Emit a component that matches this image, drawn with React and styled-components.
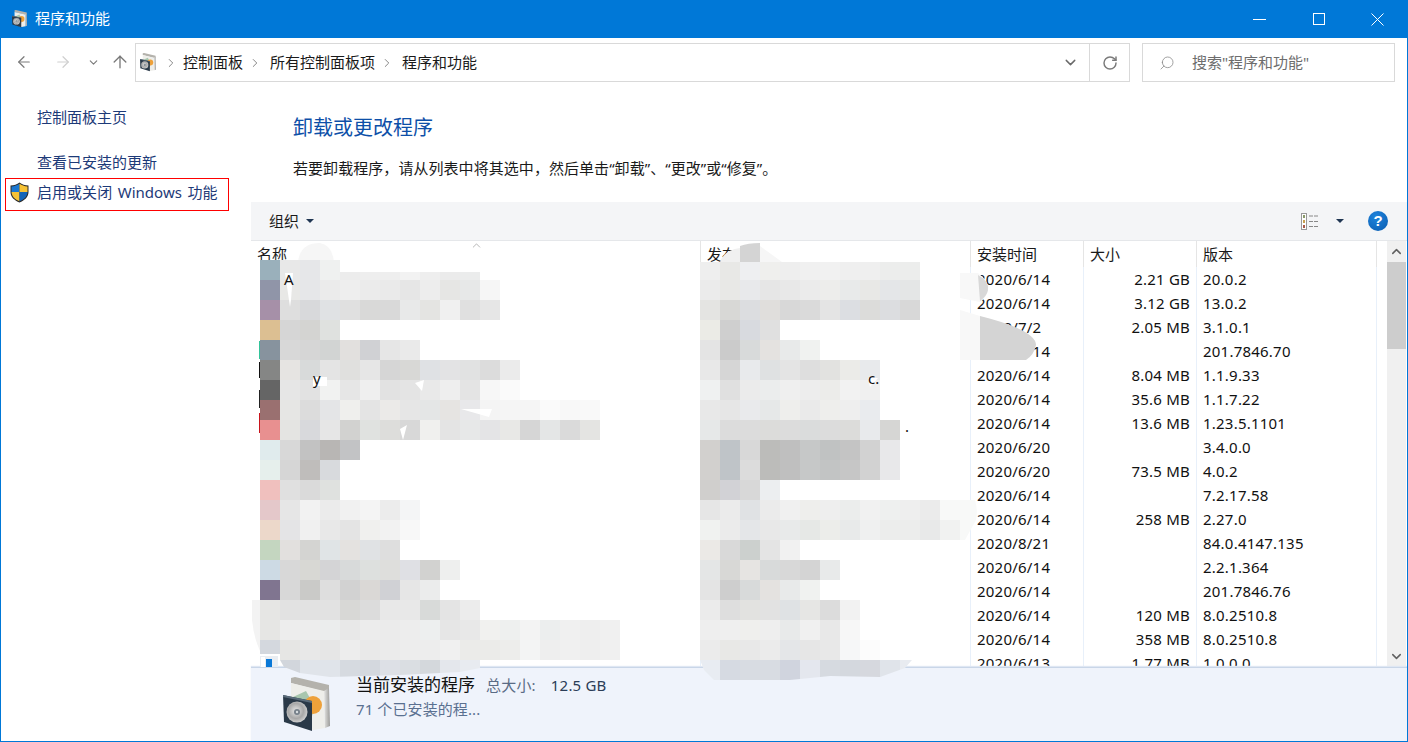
import React from "react";
import styled, { createGlobalStyle } from "styled-components";
import { ArrowLeft, ArrowRight, ArrowUp, ChevronDown, ChevronRight, ChevronUp, RotateCw, Search } from "lucide-react";

const Global = createGlobalStyle`
  html, body { margin: 0; padding: 0; background: #fff; overflow: hidden; }
  * { box-sizing: border-box; }
`;

const FONT = `"Noto Sans", "Noto Sans CJK SC", sans-serif`;

const Win = styled.div`
  position: relative; width: 1408px; height: 742px; display: flex; flex-direction: column;
  border: 1px solid #0078d7; border-top: 0; background: #fff; overflow: hidden;
  font: 15px/20px ${FONT}; color: #111;
`;
const TitleBar = styled.header`
  height: 38px; flex: none; margin: 0 -1px; background: #0078d7; color: #fff; display: flex; align-items: center; padding-left: 12px;
`;
const TitleText = styled.span`margin-left: 7px; flex: 1; position: relative; top: -1px;`;
const WinBtn = styled.div`
  width: 59px; height: 38px; display: flex; align-items: center; justify-content: center; color: #fff;
`;
const WinBtns = styled.div`display: flex; margin-right: 1px;`;

const NavBar = styled.nav`height: 58px; flex: none; display: flex; align-items: flex-start; padding-top: 5px;`;
const NavIcons = styled.div`width: 134px; height: 38px; flex: none; display: flex; align-items: center; padding-left: 14px;`;
const NavIcon = styled.span`
  display: flex; color: ${p => p.$c}; margin-left: ${p => p.$ml || 0}px;
`;
const Address = styled.div`
  width: 995px; height: 39px; flex: none; border: 1px solid #d9d9d9; display: flex; align-items: center; padding-left: 4px;
`;
const Crumb = styled.span`color: #1a1a1a; position: relative; top: -1px;`;
const CrumbSep = styled.span`
  display: flex; color: #777; margin: 0 ${p => p.$r || 7}px 0 ${p => p.$l || 7}px;
`;
const AddrSpacer = styled.div`flex: 1;`;
const AddrDrop = styled.div`width: 38px; height: 100%; display: flex; align-items: center; justify-content: center; color: #6a6a6a; border-right: 1px solid #d9d9d9;`;
const AddrRefresh = styled.div`width: 39px; height: 100%; display: flex; align-items: center; justify-content: center; color: #7a7a7a;`;
const SearchBox = styled.div`
  width: 253px; height: 39px; flex: none; margin-left: 12px; border: 1px solid #d9d9d9; display: flex; align-items: center; padding-left: 16px; color: #6d6d6d;
  span.label { position: relative; top: -1px; }
`;
const SearchGlass = styled.span`display: flex; color: #8a8a8a; transform: scaleX(-1); margin-right: 17px;`;

const Body = styled.div`flex: 1; min-height: 0; display: flex;`;
const Sidebar = styled.aside`width: 250px; flex: none; display: flex; flex-direction: column; padding-top: 11px;`;
const SideLink = styled.div`
  color: #1d3a78; padding-left: 36px; height: 20px; margin-bottom: ${p => p.$mb || 0}px;
`;
const SideFeature = styled.div`
  margin: 0 0 0 4px; width: 224px; height: 33px; border: 1px solid #f00; color: #1d3a78; display: flex; align-items: center; padding-left: 4px;
  svg { margin-top: -5px; }
  span { margin-left: 8px; position: relative; top: -3px; word-spacing: 1.5px; letter-spacing: .04px; }
`;
const Main = styled.main`flex: 1; min-width: 0; display: flex; flex-direction: column;`;
const Intro = styled.div`height: 106px; flex: none; padding: 19px 0 0 42px;`;
const Heading = styled.h1`margin: 0; font-size: 20px; line-height: 26px; font-weight: 400; color: #0d4fa8;`;
const Desc = styled.p`margin: 17px 0 0; line-height: 20px; color: #1a1a1a; letter-spacing: .055px;`;
const Toolbar = styled.div`
  height: 39px; flex: none; background: #f4f5f7; border-bottom: 1px solid #e5e7ea; display: flex; align-items: center; padding: 0 19px 0 18px;
`;
const Organize = styled.span`color: #1a1a1a; flex: 1; display: flex; align-items: center;`;
const Caret = styled.i`
  display: inline-block; width: 0; height: 0; border: 4px solid transparent; border-top: 4px solid #1f3552; border-bottom: 0; margin-left: ${p => p.$ml}px;
`;
const Help = styled.span`
  width: 20px; height: 20px; border-radius: 50%; margin-left: 24px; display: flex; align-items: center; justify-content: center;
  background: radial-gradient(circle at 40% 30%, #1f84dc, #0a5cb0); color: #fff; font: bold 15px/20px "Liberation Sans", sans-serif;
`;
const ListArea = styled.div`flex: 1; min-height: 0; display: flex; overflow: hidden;`;
const Table = styled.div`width: 1126px; flex: none; overflow: hidden;`;
const GRID = "450px 270px 113px 113px 180px";
const HeadRow = styled.div`position: relative; display: grid; grid-template-columns: ${GRID}; height: 26px;`;
const HeadCell = styled.div`
  padding-left: 6px; line-height: 27px; color: #1a1a1a; border-right: 1px solid #e5e5e5; height: 26px; overflow: hidden;
`;
const SortMark = styled.span`position: absolute; left: 219px; top: -2px; display: flex; color: #7a7a7a;`;
const Rows = styled.div`display: grid; grid-template-columns: ${GRID}; grid-auto-rows: 24px;`;
const Cell = styled.div`
  padding-left: 6px; line-height: 24px; white-space: nowrap; letter-spacing: 0.22px; color: #111; border-right: 1px solid #e8f0fa;
  text-align: ${p => p.$right ? "right" : "left"}; padding-right: ${p => p.$right ? 6 : 0}px;
`;
const Scrollbar = styled.div`
  width: 19px; flex: none; margin-left: 10px; background: #f0f0f0; display: flex; flex-direction: column; align-items: center;
`;
const ScrollBtn = styled.div`height: 21px; flex: none; display: flex; align-items: center; justify-content: center; color: #606060;`;
const Thumb = styled.div`width: 100%; height: 87px; flex: none; background: #cdcdcd;`;
const ScrollFill = styled.div`flex: 1;`;
const Footer = styled.footer`
  height: 74px; flex: none; background: #eff3fb; border-top: 1px solid #c9d6e8; box-shadow: 0 -1px 1px #dfe7f3; display: flex; padding: 0 0 0 32px; position: relative;
`;
const FooterIconWrap = styled.div`margin-top: 9px; width: 73px; flex: none;`;
const FooterText = styled.div`display: flex; flex-direction: column; padding-top: 7px;`;
const FooterLine = styled.div`display: flex; align-items: baseline; height: 24px;`;
const FootTitle = styled.span`font-size: 17px; color: #111;`;
const FootLabel = styled.span`margin-left: 11px; color: #5a6b85; letter-spacing: .2px;`;
const FootValue = styled.span`margin-left: 15px; color: #2b3d57; letter-spacing: .2px;`;
const FootCount = styled.span`color: #5a7090; letter-spacing: .1px;`;

const Overlay = styled.svg`position: absolute; left: -1px; top: 0; pointer-events: none;`;

const PkgSvg = styled.svg`display: block; flex: none;`;
const PackageIcon = ({ w, h }) => (
  <PkgSvg width={w} height={h} viewBox="0 0 50 56">
    <defs>
      <linearGradient id="boxSide" x1="0" x2="1" y1="0" y2="0">
        <stop offset="0" stopColor="#e6e6e4" /><stop offset="1" stopColor="#9a9a98" />
      </linearGradient>
      <radialGradient id="disc" cx=".45" cy=".45" r=".6">
        <stop offset="0" stopColor="#e8e8e8" /><stop offset=".6" stopColor="#a8a8a8" /><stop offset="1" stopColor="#d8d8d8" />
      </radialGradient>
    </defs>
    <polygon points="8,1 12,0 46,8 46,13 42,15 8,6" fill="#b4b2ac" />
    <polygon points="8,6 41,14 42,51 30,53 8,45" fill="#eeeeea" />
    <polygon points="41,14 46,11 47,49 42,51" fill="url(#boxSide)" />
    <polygon points="10,20 23,14 32,30 28,42 12,36" fill="#a8c6ae" />
    <circle cx="30" cy="28" r="9" fill="#eea13a" />
    <polygon points="0,18 29,24 29,54 1,45" fill="#2a3948" />
    <polygon points="0,18 29,24 29,26 0,20" fill="#5a6b7a" />
    <circle cx="14" cy="35" r="10.5" fill="url(#disc)" />
    <circle cx="14" cy="35" r="3" fill="#76808a" />
    <circle cx="14" cy="35" r="1.2" fill="#d8dde0" />
  </PkgSvg>
);

const Shield = () => (
  <svg width="19" height="21" viewBox="0 0 19 21" style={{ flex: "none" }}>
    <path d="M9.5 0.5 C12 2.5 15 3.4 18.5 3.5 V10 C18.5 15 14.5 18.5 9.5 20.5 C4.5 18.5 0.5 15 0.5 10 V3.5 C4 3.4 7 2.5 9.5 0.5Z" fill="#2b2b2b" />
    <path d="M9.5 1.8 V10 H1.5 V4.4 C4.6 4.3 7.2 3.4 9.5 1.8Z" fill="#1b77d0" />
    <path d="M9.5 1.8 C11.8 3.4 14.4 4.3 17.5 4.4 V10 H9.5Z" fill="#f6c235" />
    <path d="M1.5 10 H9.5 V19.3 C5 17.5 1.7 14.5 1.5 10Z" fill="#f6c235" />
    <path d="M17.5 10 H9.5 V19.3 C14 17.5 17.3 14.5 17.5 10Z" fill="#1464b8" />
  </svg>
);

const ViewIcon = () => (
  <svg width="19" height="17" viewBox="0 0 19 17">
    <rect x=".5" y=".5" width="5" height="16" fill="#fff" stroke="#999" />
    <rect x="2" y="2" width="2" height="3" fill="#8a9a6a" />
    <rect x="2" y="7" width="2" height="3" fill="#c8a050" />
    <rect x="2" y="12" width="2" height="3" fill="#a85a4a" />
    <path d="M8 3h10M8 8.500h10M8 13.500h10" stroke="#888" strokeWidth="1" strokeDasharray="4 1" />
  </svg>
);

const MinGlyph = () => <svg width="13" height="1" viewBox="0 0 13 1"><path d="M0 .5h13" stroke="#fff" /></svg>;
const MaxGlyph = () => <svg width="12" height="12" viewBox="0 0 12 12"><rect x=".5" y=".5" width="11" height="11" fill="none" stroke="#fff" /></svg>;
const CloseGlyph = () => <svg width="13" height="13" viewBox="0 0 13 13"><path d="M.5 .5l12 12M12.500 .5l-12 12" stroke="#fff" fill="none" /></svg>;

const RowsData = [
  ["2020/6/14", "2.21 GB", "20.0.2"],
  ["2020/6/14", "3.12 GB", "13.0.2"],
  ["2020/7/2", "2.05 MB", "3.1.0.1"],
  ["2020/6/14", "", "201.7846.70"],
  ["2020/6/14", "8.04 MB", "1.1.9.33"],
  ["2020/6/14", "35.6 MB", "1.1.7.22"],
  ["2020/6/14", "13.6 MB", "1.23.5.1101"],
  ["2020/6/20", "", "3.4.0.0"],
  ["2020/6/20", "73.5 MB", "4.0.2"],
  ["2020/6/14", "", "7.2.17.58"],
  ["2020/6/14", "258 MB", "2.27.0"],
  ["2020/8/21", "", "84.0.4147.135"],
  ["2020/6/14", "", "2.2.1.364"],
  ["2020/6/14", "", "201.7846.76"],
  ["2020/6/14", "120 MB", "8.0.2510.8"],
  ["2020/6/14", "358 MB", "8.0.2510.8"],
  ["2020/6/13", "1.77 MB", "1.0.0.0"],
];

/* x, y, h, cells: redaction mosaic over the blurred columns */
const MOSAIC = [
  [260, 260, 20, "9ab0bb e8e8e8 e6e7e9 eff1f0"],
  [340, 272, 8, "ececec eeeeee eeeeee f2f2f2 eeeeee ebebeb ebecec"],
  [260, 280, 20, "9095a8 e8e8e6 e6e7e9 ebebeb eeeeee ebebeb eaeaea e6e6e6 ededed e6e6e4 e7e8e8 f6f6f6"],
  [260, 300, 20, "a690a8 dedede d8d9db e0e2e4 e0e0e0 d9d9d8 d9d9d9 e8e9e9 e4e4e2 f0f0f0 e0e0e0 e6e6e6"],
  [260, 320, 20, "dcbf92 d6d6d6 d4d4d2 dfe1df"],
  [260, 340, 20, "87939e d8d8d8 d6d6d6 d2d4d3 e2e0de d0d1d4 e6e6e6 eaeaea"],
  [260, 360, 20, "858685 e6e4e2 d8dada e4e4e4 e0e0de e6e6e6 d6d6d6 d8d8d6 dfe1e4 e3e3e4 e1e2e2 dcdcdc ebebeb"],
  [260, 380, 20, "656565 e6e6e6 e2e2e2 f1f2f1 e6e6e6 efefef e2e2e2 e4e4e4 e9e9e9 eeeeee e4e4e4 f7f7f7 fafafa"],
  [260, 400, 20, "9a7070 e6e6e4 dcdcdc e4e5e7 efefed e4e4e4 ebeae8 e6e6e6 e4e6e6 e6e4e2 e8e8ea f4f4f4 f5f5f5 f5f5f5 fafafa f8f8f8 f9f9f9"],
  [260, 420, 20, "e89090 e4e4e2 d8d9dc e6e6e6 d2d2d0 e0e2e0 dddddb d8d8d8 f0f0ee e4e4e4 e7e8e8 e4e4e6 e8e8e6 d6d6d6 e4e6e6 dadada e4e4e2"],
  [260, 440, 20, "e0ebed d8d8d8 c2c2c2 b8b6b4 c2c3c5"],
  [260, 460, 20, "e6efec d6d6d6 bfbdbb d8dadd"],
  [260, 480, 20, "f0c0be e0e0e0 dadada dfe1df"],
  [260, 500, 20, "e4c8ca e6e6e6 f2f2f2 ebebeb f1f1f1 f4f4f4 ececec f4f5f6"],
  [260, 520, 20, "ecd8ca e4e4e6 f0f0f0 e8e8e8 e4e4e4 f0f0ee f2f2f2 f8f8f8"],
  [260, 540, 20, "c4d6c0 e2e0de d4d4d2 e0e4e6 e4e2e0 e0e2e4 dedede"],
  [260, 560, 20, "cddae4 d8d8d8 d8d8d4 d4d4d6 d8dada dde0de dededc dfe0e4 d2d2d0 eeefee"],
  [260, 580, 20, "807590 d8d8d8 cacac8 dedede d2d2d2 dad8d6 d0d1d5 e6e6e6 ebecec"],
  [260, 600, 20, "e6e6e4 e2e2e2 e2e2e2 e2e2e2 d8d8d6 dcdcdc e8e8e8 e8e8e8 d8dad9 e4e4e4 ececec"],
  [260, 620, 20, "e6e6e4 ededed ededed ebeded e8e8e8 ececec ebebeb ededed edefef e6e6e6 e8e8e8 f1f1ef eef0ef f3f3f3 eceeee f0f0f0 eeeeee f0f0f0"],
  [260, 640, 14, "d4d8de"],
  [280, 640, 20, "e6e6e4 e8e8e8 e6e6e6 ededed e9e9e9 ebebeb ededed ededed f0f0f0 ebebe9 ebebe9 ededeb f3f4f4 eeeeee f0f0f0 eeeeee f0f0f0"],

  [700, 262, 18, "eeeeee e8e8e6 eeeff1 efefed eeeeee f0f0f0 f1f1f1 efefef efefef ecedec ecedec"],
  [700, 280, 20, "ebebeb e8e8e6 e8e9eb e6e6e6 e8e8e8 ebebeb ededeb e8eaea e8e8e6 e4e6e8 e4e6e6"],
  [700, 300, 20, "e4e4e2 d8d8d6 dcdde0 e0dedc d8d8d8 dadada e4e4e4 dcdee2 dcdcda dcdde0 d8d8d8"],
  [700, 320, 20, "ebebe6 cfcfcf d8dadf e0e0e0"],
  [700, 340, 20, "e4e4e4 cbcbcb d8dada e4e2e0 e8eaea f0f2f0"],
  [700, 360, 20, "e8e8e8 d6d6d6 e8eaec dfe1e2 e4e4e4 dedede e2e2e0 ebebe8 e8eaec"],
  [700, 380, 20, "eff1f1 e0e0e0 ebebeb ebeded efefef ededed ececea f2f2f2 f0f0f0"],
  [700, 400, 20, "e8e8e8 e6e6e6 e9eaec e6e8e8 eeeeec eaeaea eeeeec eeeeee e9ebee"],
  [700, 420, 20, "e6e8e8 dcdcdc dcdcdc dcdcda dcdcdc dadcdc dcdcdc dcdcda e8eaec d6d6d4"],
  [700, 440, 20, "d2d0ce bfc4c8 d8d8d8 bcbcba bfbfbf c6c8c8 c0c2c2 c4c4c4 d2d2d2 e8e8ea"],
  [700, 460, 20, "d2d0ce bfc4c8 dcdcdc bcbcba bfbfbf c6c8c8 c2c4c4 c6c6c6 d2d2d2 e8e8ea"],
  [700, 480, 20, "d0cfcd d2d2d6 d8d8d8 eceef0"],
  [700, 500, 20, "e6e6e6 ebebeb e0e2e4 ebebeb f0f0f0 eeeeec eeeeee ebedec f1f1f1 eef0ef eeeeee ebebeb f8f9f8"],
  [700, 520, 20, "f0f2f0 ebebeb e4e6e8 e8e8e8 e8eaea e6e8e6 ecedea e8eaea eff0f0 ecedec ecedec e8e9e9 f1f2f1"],
  [700, 540, 20, "ebe9e6 d9d9d9 ccd0ce e4e4e4 f1f1f1"],
  [700, 560, 20, "e4e6e6 d8d8d6 e6e4e2 d8dada d8d8d8 d4d4d4 e8eaea"],
  [700, 580, 20, "e4e4e4 cecece d8dada e4e2e0 e8eaea f0f2f0"],
  [700, 600, 20, "ebebeb dedede e2e2e0 e2e2e2 dfe2e4 e6e6e4 dcdcdc f2f2f2"],
  [700, 620, 20, "eeeeee efefef efefed eeeeee e8eaea f0f0f0 e8e8e8 f7f7f7"],
  [700, 640, 20, "ebebeb e8e8e6 e8e8e8 ebebeb e4e6e8 e6e6e6 e8e8e8 f6f7f8 fcfcfc"],
];
const LEFT_TAIL = "d2d6dc e0e4ea e0e4ea d6dae0 d4d8de dde0e6 dadee2 d4d8dc e4e7ec e8ebf0";
const RIGHT_TAIL = "e8ecf2 d6dae2 d8dce2 d8dce2 d0d4de e4e7ee d6dae0 d4d8de d6d8de e0e4ea e8ebf0";

const Cells = ({ x, y, h, cells }) =>
  cells.split(" ").map((c, i) => <rect key={i} x={x + i * 20} y={y} width={20} height={h} fill={`#${c}`} />);

const Mosaic = () => (
  <Overlay width="1408" height="742" viewBox="0 0 1408 742" shapeRendering="crispEdges">
    <defs>
      <clipPath id="leftTail"><polygon points="280,660 480,660 480,668 460,672 400,675 330,677 300,673 284,667" /></clipPath>
      <clipPath id="rightTail"><polygon points="700,660 912,660 905,668 880,677 830,676 790,680 714,680 704,670" /></clipPath>
    </defs>
    <g shapeRendering="auto">
      <rect x="259" y="362" width="3" height="16" fill="#111" />
      <rect x="259" y="390" width="3" height="18" fill="#222" />
      <rect x="259" y="413" width="3" height="20" fill="#c8141c" />
      <rect x="259" y="341" width="3" height="18" fill="#33c49a" />
      <path d="M298 262 Q300 243 320 243 Q332 245 334 262Z" fill="#f6f6f6" />
      <path d="M720 262 Q724 250 740 248 V262Z" fill="#f0f0f0" />
      <path d="M740 262 V246 Q748 243 760 243 V262Z" fill="#d4d4d4" />
      <path d="M760 246 L782 262 H760Z" fill="#f6f6f6" />
      <path d="M252 600 L262 600 L262 655 Q254 640 252 620Z" fill="#f3f3f3" />
      <path d="M960 273 H978 Q988 280 988 290 Q986 298 980 302 L960 298Z" fill="#f8f8f8" />
      <path d="M978 275 Q990 282 988 290 Q987 296 980 301Z" fill="#d8d8d8" />
      <path d="M960 310 L980 316 V360 H960Z" fill="#f8f8f8" />
      <path d="M980 316 Q1036 330 1036 345 Q1034 355 1026 360 H980Z" fill="#d4d4d4" />
      <path d="M960 500 H975 Q978 510 976 520 L965 540 L960 540Z" fill="#f8f9f8" />
    </g>
    {MOSAIC.map(([x, y, h, cells]) => <Cells key={`${x}-${y}`} x={x} y={y} h={h} cells={cells} />)}
    <g clipPath="url(#leftTail)"><Cells x={280} y={660} h={20} cells={LEFT_TAIL} /></g>
    <g clipPath="url(#rightTail)"><Cells x={700} y={660} h={20} cells={RIGHT_TAIL} /></g>
    <g shapeRendering="auto">
      <polygon points="285,273 293,273 291,300 290,307" fill="#fff" />
      <rect x="313" y="377" width="14" height="9" fill="#fff" />
      <polygon points="415,383 424,380 422,391" fill="#fff" />
      <polygon points="400,429 407,425 403,440" fill="#fff" />
      <polygon points="461,409 492,409 489,417" fill="#fff" />
      <polygon points="868,378 878,378 870,387" fill="#fff" />
      <rect x="260" y="656" width="18" height="11" fill="#e9edf2" />
      <rect x="261" y="657" width="4" height="10" fill="#fff" />
      <rect x="266" y="659" width="6" height="8" fill="#0a78d7" />
      <text x="284" y="285" fontFamily="Noto Sans" fontSize="15" fill="#111">A</text>
      <text x="313" y="384" fontFamily="Noto Sans" fontSize="15" fill="#111">y</text>
      <text x="905" y="432" fontFamily="Noto Sans" fontSize="15" fill="#111">.</text>
      <text x="868" y="384" fontFamily="Noto Sans" fontSize="15" fill="#111">c.</text>
    </g>
  </Overlay>
);

export default function App() {
  return (
    <>
      <Global />
      <Win>
        <TitleBar>
          <PackageIcon w={16} h={18} />
          <TitleText>程序和功能</TitleText>
          <WinBtns>
            <WinBtn><MinGlyph /></WinBtn>
            <WinBtn><MaxGlyph /></WinBtn>
            <WinBtn><CloseGlyph /></WinBtn>
          </WinBtns>
        </TitleBar>
        <NavBar>
          <NavIcons>
            <NavIcon $c="#7a7a7a"><ArrowLeft size={18} strokeWidth={1.6} /></NavIcon>
            <NavIcon $c="#cfcfcf" $ml={21}><ArrowRight size={18} strokeWidth={1.6} /></NavIcon>
            <NavIcon $c="#7a7a7a" $ml={15}><ChevronDown size={13} strokeWidth={2} /></NavIcon>
            <NavIcon $c="#7a7a7a" $ml={10}><ArrowUp size={20} strokeWidth={1.6} /></NavIcon>
          </NavIcons>
          <Address>
            <PackageIcon w={17} h={19} />
            <CrumbSep $l={7} $r={5}><ChevronRight size={14} strokeWidth={1.5} /></CrumbSep>
            <Crumb>控制面板</Crumb>
            <CrumbSep $l={5} $r={8}><ChevronRight size={14} strokeWidth={1.5} /></CrumbSep>
            <Crumb>所有控制面板项</Crumb>
            <CrumbSep $l={5} $r={8}><ChevronRight size={14} strokeWidth={1.5} /></CrumbSep>
            <Crumb>程序和功能</Crumb>
            <AddrSpacer />
            <AddrDrop><ChevronDown size={17} strokeWidth={2} /></AddrDrop>
            <AddrRefresh><RotateCw size={16} strokeWidth={2.2} /></AddrRefresh>
          </Address>
          <SearchBox>
            <SearchGlass><Search size={16} strokeWidth={1.2} /></SearchGlass>
            <span className="label">搜索"程序和功能"</span>
          </SearchBox>
        </NavBar>
        <Body>
          <Sidebar>
            <SideLink $mb={25}>控制面板主页</SideLink>
            <SideLink $mb={6}>查看已安装的更新</SideLink>
            <SideFeature><Shield /><span>启用或关闭 Windows 功能</span></SideFeature>
          </Sidebar>
          <Main>
            <Intro>
              <Heading>卸载或更改程序</Heading>
              <Desc>若要卸载程序，请从列表中将其选中，然后单击“卸载”、“更改”或“修复”。</Desc>
            </Intro>
            <Toolbar>
              <Organize>组织<Caret $ml={7} /></Organize>
              <ViewIcon />
              <Caret $ml={16} />
              <Help>?</Help>
            </Toolbar>
            <ListArea>
              <Table>
                <HeadRow>
                  <HeadCell>名称</HeadCell>
                  <HeadCell>发布者</HeadCell>
                  <HeadCell>安装时间</HeadCell>
                  <HeadCell>大小</HeadCell>
                  <HeadCell>版本</HeadCell>
                  <SortMark><ChevronUp size={13} strokeWidth={1} /></SortMark>
                </HeadRow>
                <Rows>
                  {RowsData.map((r, i) => (
                    <React.Fragment key={i}>
                      <Cell />
                      <Cell />
                      <Cell>{r[0]}</Cell>
                      <Cell $right>{r[1]}</Cell>
                      <Cell>{r[2]}</Cell>
                    </React.Fragment>
                  ))}
                </Rows>
              </Table>
              <Scrollbar>
                <ScrollBtn><ChevronUp size={15} strokeWidth={2.4} /></ScrollBtn>
                <Thumb />
                <ScrollFill />
                <ScrollBtn><ChevronDown size={15} strokeWidth={2.4} /></ScrollBtn>
              </Scrollbar>
            </ListArea>
            <Footer>
              <FooterIconWrap><PackageIcon w={50} h={56} /></FooterIconWrap>
              <FooterText>
                <FooterLine>
                  <FootTitle>当前安装的程序</FootTitle>
                  <FootLabel>总大小:</FootLabel>
                  <FootValue>12.5 GB</FootValue>
                </FooterLine>
                <FootCount>71 个已安装的程...</FootCount>
              </FooterText>
            </Footer>
          </Main>
        </Body>
        <Mosaic />
      </Win>
    </>
  );
}
